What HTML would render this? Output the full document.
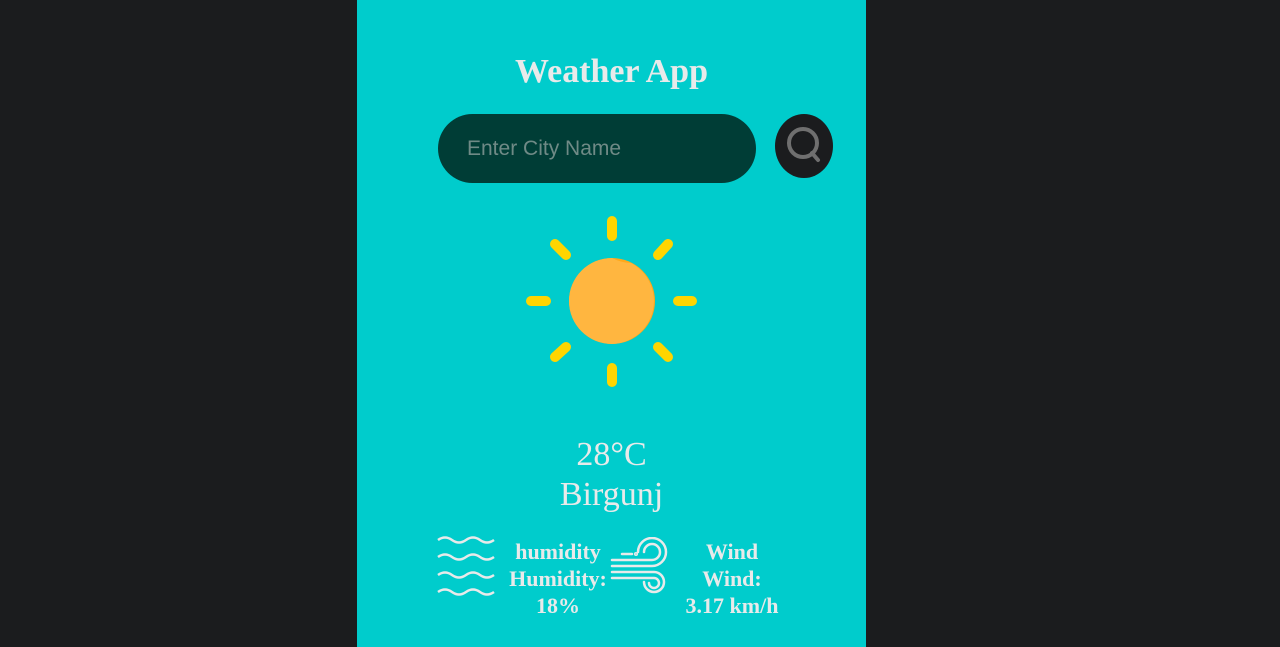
<!DOCTYPE html>
<html><head><style>
body{margin:0;background:#1b1c1e;width:1280px;height:647px;overflow:hidden;font-family:"Liberation Serif",serif;}
.card{position:absolute;left:357px;top:0;width:509px;height:647px;background:#00cccc;}
.t{position:absolute;color:#e8eaea;font-weight:bold;text-align:center;}
</style></head><body>
<div class="card"></div>
<div class="t" style="left:357px;width:509px;top:53px;font-size:34px;">Weather App</div>
<div style="position:absolute;left:438px;top:114px;width:318px;height:69px;border-radius:35px;background:#003d36;"></div>
<div style="position:absolute;left:467px;top:137px;font-family:'Liberation Sans',sans-serif;font-size:21px;color:#6f8a86;">Enter City Name</div>
<div style="position:absolute;left:775px;top:114px;width:58px;height:64px;border-radius:50%;background:#1b1c1e;"></div>
<svg style="position:absolute;left:775px;top:114px" width="58" height="64"><circle cx="28" cy="29" r="14" fill="none" stroke="#6f6f6f" stroke-width="4"/><line x1="37" y1="39" x2="43" y2="46" stroke="#6f6f6f" stroke-width="4" stroke-linecap="round"/></svg>
<svg style="position:absolute;left:525px;top:215px" width="174" height="174">
<g stroke="#ffd500" stroke-width="10" stroke-linecap="round">
<line x1="87" y1="6" x2="87" y2="21"/><line x1="87" y1="153" x2="87" y2="167"/>
<line x1="6" y1="86" x2="21" y2="86"/><line x1="153" y1="86" x2="167" y2="86"/>
<line x1="30" y1="29" x2="41" y2="40"/><line x1="133" y1="132" x2="143" y2="142"/>
<line x1="143" y1="29" x2="133" y2="40"/><line x1="41" y1="132" x2="30" y2="142"/>
</g>
<circle cx="87" cy="86" r="43" fill="#ffa81a"/>
<path d="M87 43 A43 43 0 0 0 87 129 A43 43 0 0 0 106 48 A43 43 0 0 1 87 43Z" fill="#ffb640"/>
</svg>
<div style="position:absolute;left:357px;width:509px;top:435px;text-align:center;font-size:34px;line-height:40px;color:#e8eaea;">28°C<br>Birgunj</div>
<svg style="position:absolute;left:436px;top:535px" width="62" height="62" fill="none" stroke="#e8eaea" stroke-width="2.5">
<path d="M2 5q7-5 14 0t14 0t14 0t14 0"/><path d="M2 22q7-5 14 0t14 0t14 0t14 0"/><path d="M2 40q7-5 14 0t14 0t14 0t14 0"/><path d="M2 57q7-5 14 0t14 0t14 0t14 0"/>
</svg>
<div class="t" style="left:498px;width:120px;top:538px;font-size:22px;line-height:27px;">humidity<br>Humidity:<br>18%</div>
<svg style="position:absolute;left:608px;top:537px" width="62" height="60" fill="none" stroke="#e8eaea" stroke-width="2.5" stroke-linecap="round">
<path d="M14 17h10"/><circle cx="28" cy="17" r="0.8"/>
<path d="M4 23H44A8 8 0 1 0 36 15"/>
<path d="M4 29H44A14 14 0 1 0 30 15"/>
<path d="M4 35H46A10 10 0 1 1 36 45"/>
<path d="M4 41H46A5 5 0 1 1 41 46"/>
</svg>
<div class="t" style="left:670px;width:124px;top:538px;font-size:22px;line-height:27px;">Wind<br>Wind:<br>3.17 km/h</div>
</body></html>
